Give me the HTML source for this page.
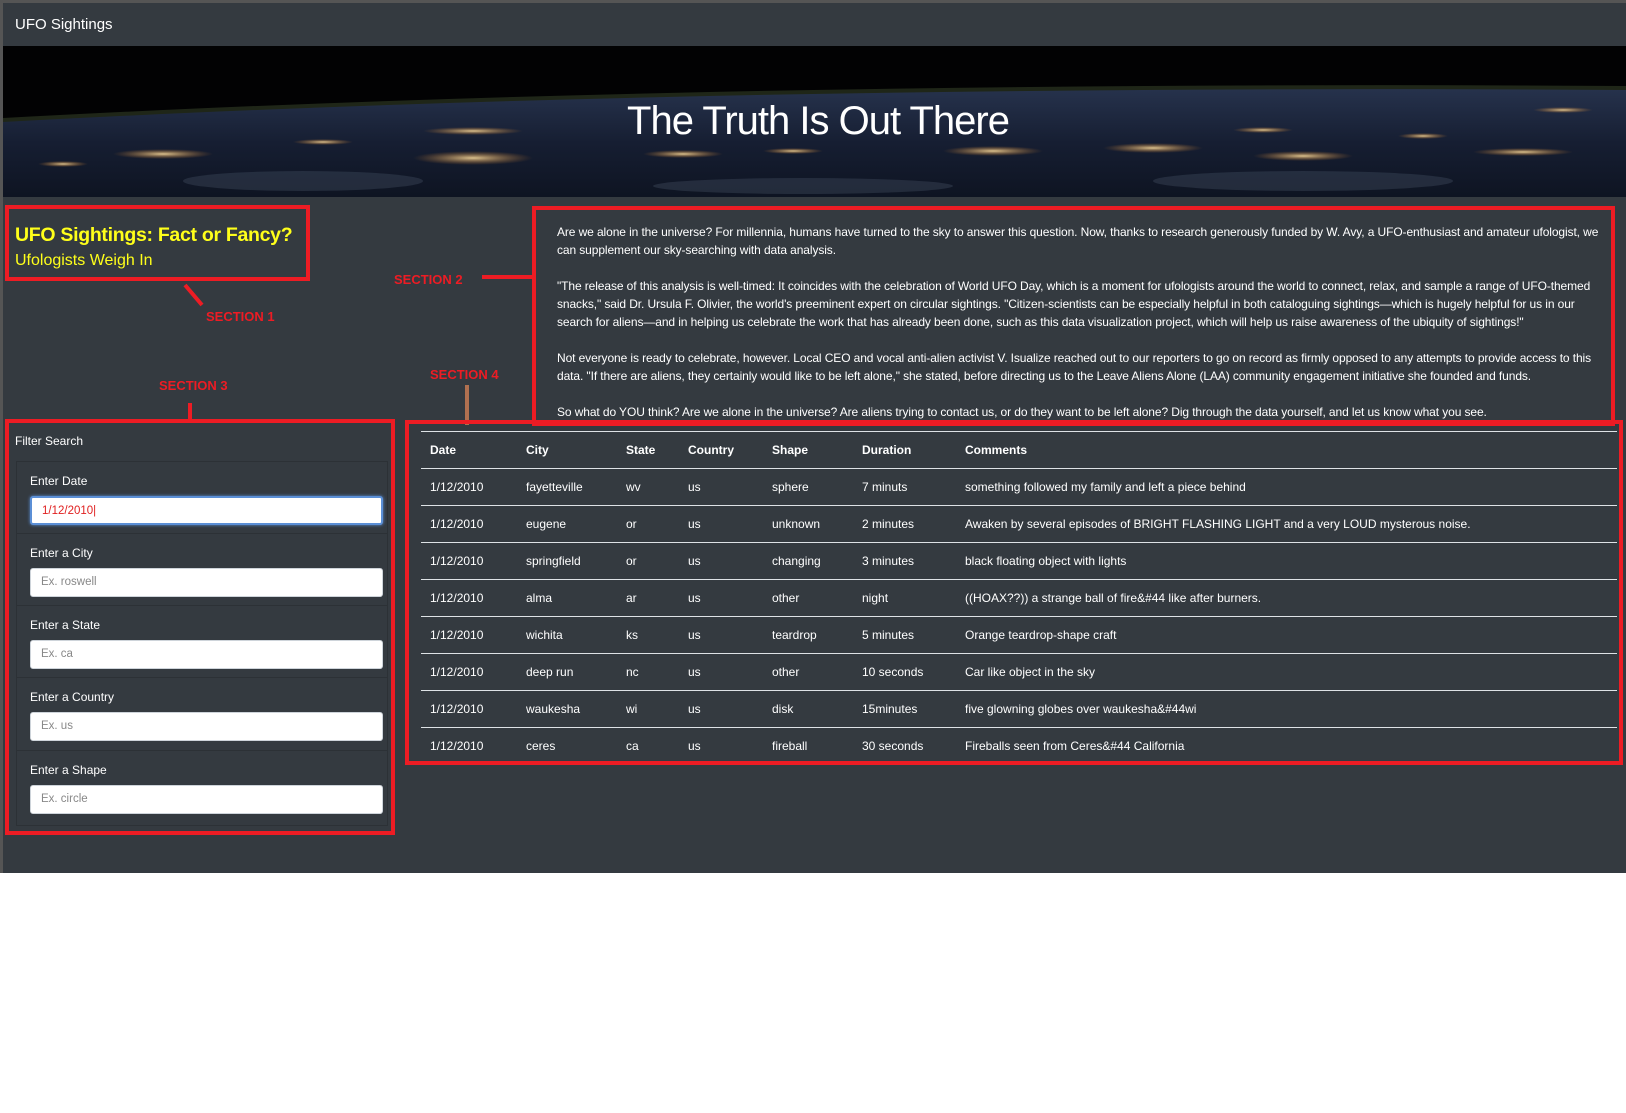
<!DOCTYPE html>
<html><head><meta charset="utf-8"><style>
*{margin:0;padding:0;box-sizing:border-box}
html,body{width:1626px;height:1113px;background:#fff;overflow:hidden;font-family:"Liberation Sans",sans-serif}
#page{position:absolute;left:0;top:0;width:1626px;height:873px;background:#343a40;border-top:3px solid #555;border-left:3px solid #555}
.a{position:absolute}
.red{position:absolute;border:4px solid #ed1c24}
.lbl{position:absolute;color:#ed1c24;font-weight:bold;font-size:13px}
.p{position:absolute;left:557px;color:#fff;font-size:12px;line-height:18px;width:1058px;letter-spacing:-0.1px}
.fi{position:absolute;left:16px;width:372px;border-top:1px solid #2c3136}
.fl{position:absolute;left:30px;color:#fff;font-size:12px}
.in{position:absolute;left:30px;width:353px;height:29px;background:#fff;border:1px solid #ced4da;border-radius:3px;color:#888;font-size:11.5px;padding:7px 10px}
table{position:absolute;left:421px;top:431px;width:1196px;border-collapse:collapse;color:#fff;font-size:12px}
td,th{height:37px;border-top:1.5px solid #dee2e6;text-align:left;padding:0 0 0 9px;font-weight:normal}
th{font-weight:bold;border-bottom:1.5px solid #dee2e6}
</style></head><body>
<div id="page"></div>
<div class="a" style="left:15px;top:16px;color:#fff;font-size:15px">UFO Sightings</div>
<svg class="a" style="left:3px;top:46px" width="1623" height="151" viewBox="0 0 1623 151">
<defs>
<linearGradient id="e" x1="0" y1="0" x2="0" y2="1"><stop offset="0" stop-color="#26324c"/><stop offset=".5" stop-color="#161e32"/><stop offset="1" stop-color="#0e1422"/></linearGradient>
<radialGradient id="l"><stop offset="0" stop-color="#ffe0a0" stop-opacity=".85"/><stop offset="1" stop-color="#c07020" stop-opacity="0"/></radialGradient>
</defs>
<rect width="1623" height="151" fill="#020203"/>
<path d="M0 72 Q700 34 1623 40 L1623 151 L0 151Z" fill="#1f2618"/>
<path d="M0 76 Q700 38 1623 44 L1623 151 L0 151Z" fill="url(#e)"/>
<g fill="url(#l)">
<ellipse cx="160" cy="108" rx="50" ry="5"/><ellipse cx="470" cy="85" rx="50" ry="4"/><ellipse cx="470" cy="112" rx="60" ry="7"/>
<ellipse cx="680" cy="108" rx="40" ry="4"/><ellipse cx="790" cy="105" rx="30" ry="3"/><ellipse cx="990" cy="105" rx="50" ry="5"/>
<ellipse cx="1150" cy="102" rx="50" ry="5"/><ellipse cx="1300" cy="110" rx="50" ry="5"/><ellipse cx="1260" cy="84" rx="30" ry="3"/>
<ellipse cx="1520" cy="106" rx="50" ry="4"/><ellipse cx="320" cy="96" rx="30" ry="3"/><ellipse cx="60" cy="118" rx="25" ry="3"/>
<ellipse cx="1560" cy="64" rx="30" ry="3"/><ellipse cx="1420" cy="90" rx="25" ry="3"/>
</g>
<g fill="#8090a8" opacity=".18"><ellipse cx="300" cy="135" rx="120" ry="10"/><ellipse cx="800" cy="140" rx="150" ry="8"/><ellipse cx="1300" cy="135" rx="150" ry="10"/></g>
</svg>
<div class="a" style="left:0;width:1636px;top:99px;text-align:center;color:#fff;font-size:40px;letter-spacing:-1px">The Truth Is Out There</div>

<div class="red" style="left:5px;top:205px;width:305px;height:76px"></div>
<div class="a" style="left:15px;top:224px;color:#ffff1a;font-size:19.5px;font-weight:bold;letter-spacing:-0.3px">UFO Sightings: Fact or Fancy?</div>
<div class="a" style="left:15px;top:252px;color:#ffff1a;font-size:16px">Ufologists Weigh In</div>
<svg class="a" style="left:0;top:0" width="1626" height="873">
<line x1="185" y1="285" x2="202" y2="305" stroke="#ed1c24" stroke-width="4"/>
<line x1="482" y1="277" x2="534" y2="277" stroke="#ed1c24" stroke-width="4"/>
<line x1="190" y1="403" x2="190" y2="421" stroke="#ed1c24" stroke-width="4"/>
<line x1="467" y1="385" x2="467" y2="425" stroke="#b07050" stroke-width="4"/>
</svg>
<div class="lbl" style="left:206px;top:309px">SECTION 1</div>
<div class="lbl" style="left:394px;top:272px">SECTION 2</div>
<div class="lbl" style="left:159px;top:378px">SECTION 3</div>
<div class="lbl" style="left:430px;top:367px">SECTION 4</div>

<div class="red" style="left:532px;top:206px;width:1083px;height:220px"></div>
<div class="p" style="top:223px">Are we alone in the universe? For millennia, humans have turned to the sky to answer this question. Now, thanks to research generously funded by W. Avy, a UFO-enthusiast and amateur ufologist, we<br>can supplement our sky-searching with data analysis.</div>
<div class="p" style="top:277px">"The release of this analysis is well-timed: It coincides with the celebration of World UFO Day, which is a moment for ufologists around the world to connect, relax, and sample a range of UFO-themed<br>snacks," said Dr. Ursula F. Olivier, the world's preeminent expert on circular sightings. "Citizen-scientists can be especially helpful in both cataloguing sightings—which is hugely helpful for us in our<br>search for aliens—and in helping us celebrate the work that has already been done, such as this data visualization project, which will help us raise awareness of the ubiquity of sightings!"</div>
<div class="p" style="top:349px">Not everyone is ready to celebrate, however. Local CEO and vocal anti-alien activist V. Isualize reached out to our reporters to go on record as firmly opposed to any attempts to provide access to this<br>data. "If there are aliens, they certainly would like to be left alone," she stated, before directing us to the Leave Aliens Alone (LAA) community engagement initiative she founded and funds.</div>
<div class="p" style="top:403px">So what do YOU think? Are we alone in the universe? Are aliens trying to contact us, or do they want to be left alone? Dig through the data yourself, and let us know what you see.</div>

<div class="red" style="left:5px;top:419px;width:390px;height:416px"></div>
<div class="a" style="left:15px;top:434px;color:#fff;font-size:12px">Filter Search</div>
<div class="fi" style="top:461px;height:365px;border:1px solid #2c3136"></div>
<div class="fi" style="top:533px"></div><div class="fi" style="top:605px"></div><div class="fi" style="top:677px"></div><div class="fi" style="top:750px"></div>
<div class="fl" style="top:474px">Enter Date</div>
<div class="in" style="top:496px;border:2px solid #5b8fd6;color:#e02020;box-shadow:0 0 3px #5b8fd6">1/12/2010|</div>
<div class="fl" style="top:546px">Enter a City</div><div class="in" style="top:568px">Ex. roswell</div>
<div class="fl" style="top:618px">Enter a State</div><div class="in" style="top:640px">Ex. ca</div>
<div class="fl" style="top:690px">Enter a Country</div><div class="in" style="top:712px">Ex. us</div>
<div class="fl" style="top:763px">Enter a Shape</div><div class="in" style="top:785px">Ex. circle</div>

<div class="red" style="left:405px;top:420px;width:1218px;height:345px"></div>
<table>
<tr><th style="width:96px">Date</th><th style="width:100px">City</th><th style="width:62px">State</th><th style="width:84px">Country</th><th style="width:90px">Shape</th><th style="width:103px">Duration</th><th>Comments</th></tr>
<tr><td>1/12/2010</td><td>fayetteville</td><td>wv</td><td>us</td><td>sphere</td><td>7 minuts</td><td>something followed my family and left a piece behind</td></tr>
<tr><td>1/12/2010</td><td>eugene</td><td>or</td><td>us</td><td>unknown</td><td>2 minutes</td><td>Awaken by several episodes of BRIGHT FLASHING LIGHT and a very LOUD mysterous noise.</td></tr>
<tr><td>1/12/2010</td><td>springfield</td><td>or</td><td>us</td><td>changing</td><td>3 minutes</td><td>black floating object with lights</td></tr>
<tr><td>1/12/2010</td><td>alma</td><td>ar</td><td>us</td><td>other</td><td>night</td><td>((HOAX??)) a strange ball of fire&amp;#44 like after burners.</td></tr>
<tr><td>1/12/2010</td><td>wichita</td><td>ks</td><td>us</td><td>teardrop</td><td>5 minutes</td><td>Orange teardrop-shape craft</td></tr>
<tr><td>1/12/2010</td><td>deep run</td><td>nc</td><td>us</td><td>other</td><td>10 seconds</td><td>Car like object in the sky</td></tr>
<tr><td>1/12/2010</td><td>waukesha</td><td>wi</td><td>us</td><td>disk</td><td>15minutes</td><td>five glowning globes over waukesha&amp;#44wi</td></tr>
<tr><td>1/12/2010</td><td>ceres</td><td>ca</td><td>us</td><td>fireball</td><td>30 seconds</td><td>Fireballs seen from Ceres&amp;#44 California</td></tr>
</table>
</body></html>
